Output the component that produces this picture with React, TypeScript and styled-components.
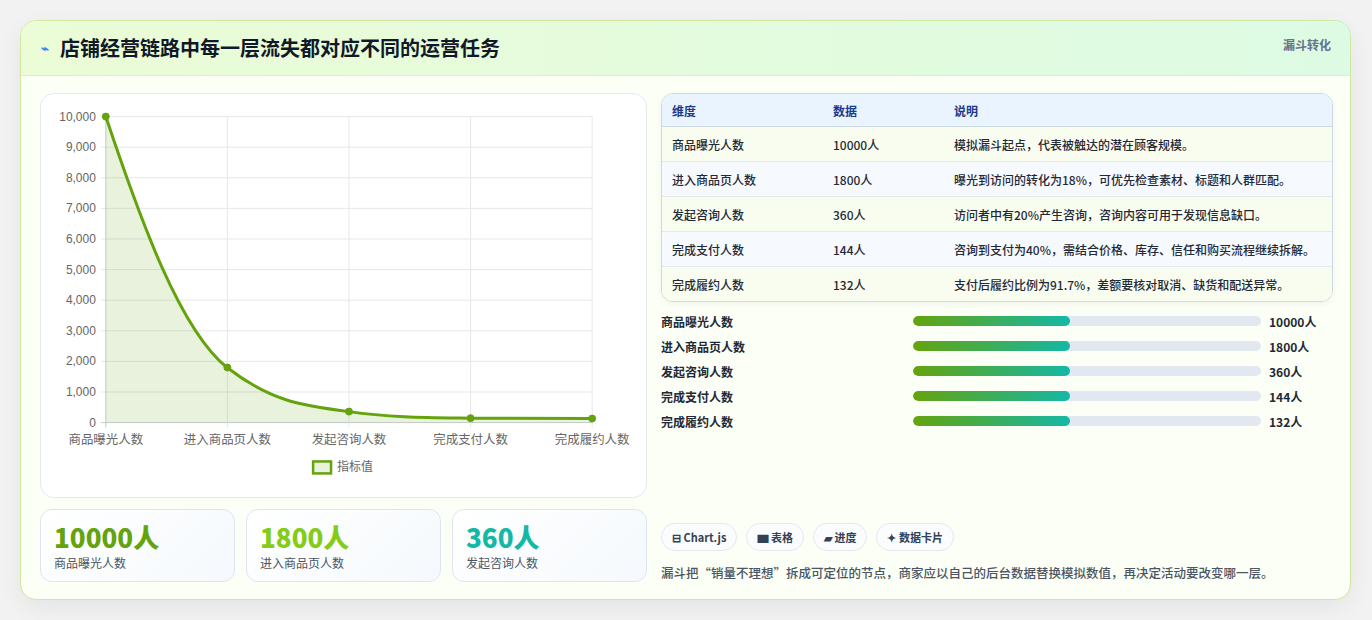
import React from 'react';
import styled, { createGlobalStyle } from 'styled-components';

const Global = createGlobalStyle`
  body {
    margin: 0;
    background: #f1f2f1;
    font-family: "Noto Sans CJK SC", "Noto Sans", sans-serif;
    color: #1f2937;
  }
`;

const rows = [
  { name: '商品曝光人数', value: '10000人', note: '模拟漏斗起点，代表被触达的潜在顾客规模。' },
  { name: '进入商品页人数', value: '1800人', note: '曝光到访问的转化为18%，可优先检查素材、标题和人群匹配。' },
  { name: '发起咨询人数', value: '360人', note: '访问者中有20%产生咨询，咨询内容可用于发现信息缺口。' },
  { name: '完成支付人数', value: '144人', note: '咨询到支付为40%，需结合价格、库存、信任和购买流程继续拆解。' },
  { name: '完成履约人数', value: '132人', note: '支付后履约比例为91.7%，差额要核对取消、缺货和配送异常。' },
];

const values = [10000, 1800, 360, 144, 132];

const FunnelChart: React.FC = () => {
  const x0 = 65;
  const step = 122;
  const yOf = (v: number) => 329 - v * 0.0307;
  const pts = values.map((v, i) => [x0 + i * step, yOf(v)]);
  const line = 'M65,22 C100,127 140,237 187,274 C230,307 260,312 309,318 C350,324 390,324 431,324.6 C480,325 520,325 553,325';
  return (
    <svg width="607" height="403" viewBox="0 0 607 403">
      {Array.from({ length: 11 }).map((_, i) => {
        const y = yOf(i * 1000);
        return (
          <g key={i}>
            <line x1={60} x2={553} y1={y} y2={y} stroke={i === 0 ? '#c8ccd2' : '#e5e7eb'} />
            <text x={55} y={y + 4} textAnchor="end" fontSize="12" fill="#666" fontFamily="Liberation Sans, sans-serif">
              {(i * 1000).toLocaleString('en-US')}
            </text>
          </g>
        );
      })}
      {pts.map(([x], i) => (
        <line key={i} x1={x} x2={x} y1={22} y2={334} stroke={i === 0 ? '#c8ccd2' : '#e5e7eb'} />
      ))}
      <path d={`${line} L553,329 L65,329 Z`} fill="rgba(101,163,13,0.14)" />
      <path d={line} fill="none" stroke="#65a30d" strokeWidth="3" />
      {pts.map(([x, y], i) => (
        <circle key={i} cx={x} cy={y} r="3.5" fill="#65a30d" stroke="#65a30d" />
      ))}
      {rows.map((r, i) => (
        <text key={r.name} x={x0 + i * step} y={351} textAnchor="middle" fontSize="12.5" fill="#666">
          {r.name}
        </text>
      ))}
      <rect x={273} y={368} width={18} height={12} fill="rgba(101,163,13,0.14)" stroke="#65a30d" strokeWidth="2.5" />
      <text x={297} y={378} fontSize="12" fill="#666">指标值</text>
    </svg>
  );
};

export default function App() {
  return (
    <>
      <Global />
      <Page>
        <Card>
          <Header>
            <Title><Spark>⌁</Spark>店铺经营链路中每一层流失都对应不同的运营任务</Title>
            <Tag>漏斗转化</Tag>
          </Header>
          <Body>
            <LeftCol>
              <ChartPanel><FunnelChart /></ChartPanel>
              <Stats>
                <Stat><StatValue color="#65a30d">10000人</StatValue><StatLabel>商品曝光人数</StatLabel></Stat>
                <Stat><StatValue color="#84cc16">1800人</StatValue><StatLabel>进入商品页人数</StatLabel></Stat>
                <Stat><StatValue color="#14b8a6">360人</StatValue><StatLabel>发起咨询人数</StatLabel></Stat>
              </Stats>
            </LeftCol>
            <RightCol>
              <Table>
                <thead>
                  <tr><Th>维度</Th><Th>数据</Th><Th>说明</Th></tr>
                </thead>
                <tbody>
                  {rows.map((r, i) => (
                    <Tr key={r.name} odd={i % 2 === 1}>
                      <Td>{r.name}</Td><Td>{r.value}</Td><Td>{r.note}</Td>
                    </Tr>
                  ))}
                </tbody>
              </Table>
              <Bars>
                {rows.map((r) => (
                  <BarRow key={r.name}>
                    <BarLabel>{r.name}</BarLabel>
                    <Track><Fill style={{ width: '45%' }} /></Track>
                    <BarValue>{r.value}</BarValue>
                  </BarRow>
                ))}
              </Bars>
              <Spacer />
              <Chips>
                <Chip bold>⊟ Chart.js</Chip>
                <Chip>▆ 表格</Chip>
                <Chip>▰ 进度</Chip>
                <Chip>✦ 数据卡片</Chip>
              </Chips>
              <Note>漏斗把“销量不理想”拆成可定位的节点，商家应以自己的后台数据替换模拟数值，再决定活动要改变哪一层。</Note>
            </RightCol>
          </Body>
        </Card>
      </Page>
    </>
  );
}

const Page = styled.div`
  padding: 20px 21px 20px 20px;
`;

const Card = styled.div`
  border: 1px solid #cfe8a0;
  border-radius: 16px;
  overflow: hidden;
  background: #fbfff5;
  box-shadow: 0 8px 24px rgba(0, 0, 0, 0.06);
`;

const Header = styled.div`
  height: 54px;
  display: flex;
  align-items: flex-start;
  justify-content: space-between;
  padding: 0 19px 0 20px;
  background: linear-gradient(90deg, #ebfcd6, #ddfbe4);
  border-bottom: 1px solid #dbefd0;
`;

const Title = styled.h1`
  margin: 0;
  line-height: 54px;
  font-size: 20px;
  font-weight: 700;
  color: #111827;
  display: flex;
  align-items: center;
`;

const Spark = styled.span`
  color: #3b82f6;
  font-size: 13px;
  margin-right: 11px;
`;

const Tag = styled.span`
  margin-top: 15px;
  font-size: 12px;
  font-weight: 700;
  color: #64748b;
`;

const Body = styled.div`
  display: grid;
  grid-template-columns: 607px 672px;
  gap: 14px;
  padding: 17px 18px 17px 19px;
`;

const LeftCol = styled.div`
  display: flex;
  flex-direction: column;
  gap: 11px;
`;

const ChartPanel = styled.div`
  height: 403px;
  background: #fff;
  border: 1px solid #e5e9ee;
  border-radius: 14px;
  overflow: hidden;
  display: flex;
`;

const Stats = styled.div`
  display: grid;
  grid-template-columns: repeat(3, 1fr);
  gap: 11px;
`;

const Stat = styled.div`
  height: 73px;
  box-sizing: border-box;
  padding: 10px 13px;
  border: 1px solid #dde6f0;
  border-radius: 12px;
  background: linear-gradient(135deg, #ffffff, #f5f9fd);
`;

const StatValue = styled.div<{ color: string }>`
  font-size: 26px;
  font-weight: 800;
  line-height: 34px;
  color: ${({ color }) => color};
`;

const StatLabel = styled.div`
  font-size: 12px;
  color: #4b5563;
`;

const RightCol = styled.div`
  display: flex;
  flex-direction: column;
`;

const Table = styled.table`
  width: 100%;
  border-collapse: separate;
  border-spacing: 0;
  border: 1px solid #cdd9e5;
  border-radius: 12px;
  overflow: hidden;
  font-size: 12px;
  color: #1f2937;
  box-shadow: 0 2px 6px rgba(0, 0, 0, 0.05);
`;

const Th = styled.th`
  text-align: left;
  height: 32px;
  padding: 0 10px;
  background: #eaf4fe;
  color: #1e3a8a;
  font-weight: 700;
  border-bottom: 1px solid #cdd9e5;
  &:nth-child(1) { width: 141px; }
  &:nth-child(2) { width: 101px; }
`;

const Tr = styled.tr<{ odd: boolean }>`
  background: ${({ odd }) => (odd ? '#f6f9fd' : '#f9fdef')};
  &:not(:last-child) td { border-bottom: 1px solid #e3e9ef; }
`;

const Td = styled.td`
  height: 34px;
  padding: 0 10px;
  font-weight: 500;
`;

const Bars = styled.div`
  margin-top: 10px;
  display: flex;
  flex-direction: column;
  gap: 7px;
`;

const BarRow = styled.div`
  display: grid;
  grid-template-columns: 244px 348px 1fr;
  gap: 8px;
  align-items: center;
  height: 18px;
  font-size: 12px;
  font-weight: 600;
`;

const BarLabel = styled.span`
  color: #1f2937;
`;

const Track = styled.div`
  height: 10px;
  border-radius: 5px;
  background: #e2e8f0;
  overflow: hidden;
`;

const Fill = styled.div`
  height: 100%;
  border-radius: 5px;
  background: linear-gradient(90deg, #65a30d, #14b8a6);
`;

const BarValue = styled.span`
  color: #1f2937;
  font-weight: 700;
`;

const Spacer = styled.div`
  flex: 1;
`;

const Chips = styled.div`
  display: flex;
  gap: 9px;
`;

const Chip = styled.span<{ bold?: boolean }>`
  height: 28px;
  box-sizing: border-box;
  padding: 0 10px;
  display: inline-flex;
  align-items: center;
  border: 1px solid #e2e8f0;
  border-radius: 14px;
  background: #fbfcfd;
  font-size: 11px;
  font-weight: ${({ bold }) => (bold ? 700 : 600)};
  color: #334155;
`;

const Note = styled.p`
  margin: 12px 0 0;
  font-size: 12.5px;
  font-weight: 500;
  color: #4b5563;
`;
